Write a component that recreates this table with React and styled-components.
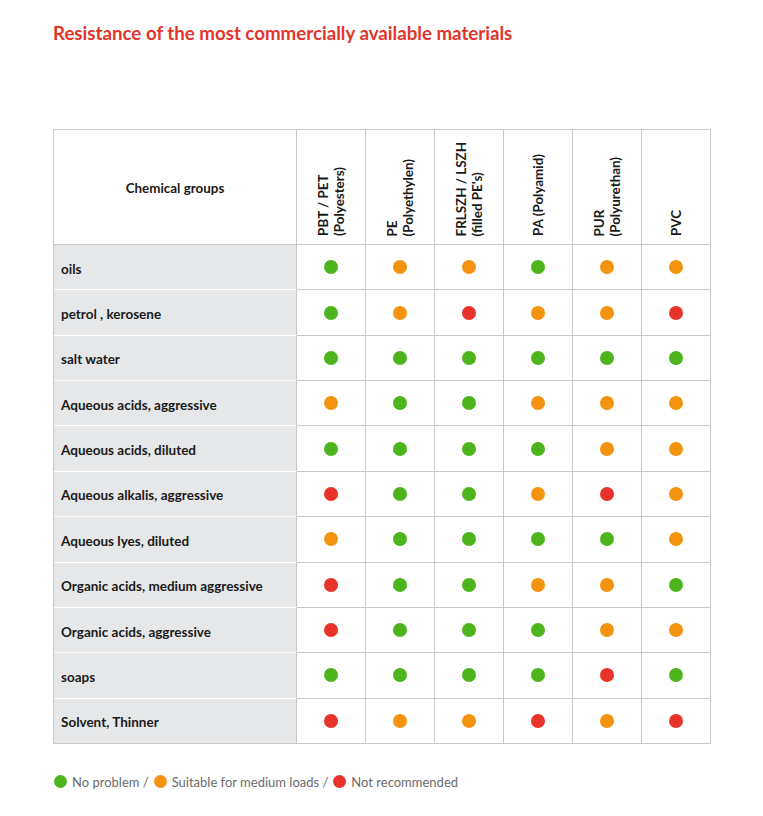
import React from "react";
import styled, { createGlobalStyle } from "styled-components";

const Global = createGlobalStyle`
  html, body { margin: 0; padding: 0; background: #fff; }
  body { font-family: Lato, "Open Sans", "Liberation Sans", sans-serif; color: #1e1e1e; }
`;

const COLORS = { G: "#4cb51b", O: "#f39310", R: "#e8322a" };
const BORDER = "#c9c9c9";

const Page = styled.div`
  width: 763px;
  min-height: 816px;
  box-sizing: border-box;
  padding: 22px 0 0 53px;
`;

const Title = styled.h1`
  margin: 0;
  font-size: 18.7px;
  line-height: 22px;
  font-weight: 700;
  color: #e2342b;
  letter-spacing: 0;
`;

const Table = styled.div`
  margin-top: 85px;
  display: grid;
  grid-template-columns: 243px repeat(6, 69px);
  grid-template-rows: 115px repeat(11, 45.36px);
  width: 658px;
  box-sizing: border-box;
  border-top: 1px solid ${BORDER};
  border-left: 1px solid ${BORDER};
`;

const Cell = styled.div`
  box-sizing: border-box;
  border-right: 1px solid ${BORDER};
  border-bottom: 1px solid ${BORDER};
  display: flex;
  align-items: center;
  justify-content: center;
`;

const CornerCell = styled(Cell)`
  font-size: 13.4px;
  font-weight: 700;
  color: #1a1a1a;
  padding-top: 2px;
`;

const HeadCell = styled(Cell)`
  align-items: flex-end;
  padding-bottom: 8px;
`;

const VerticalLabel = styled.span`
  writing-mode: vertical-rl;
  transform: rotate(180deg);
  font-size: 13.4px;
  line-height: 16px;
  font-weight: 700;
  color: #1a1a1a;
  white-space: nowrap;
`;

const LabelCell = styled(Cell)`
  justify-content: flex-start;
  background: #e6e7e8;
  border-bottom-color: ${(p) => (p.$last ? BORDER : "#ffffff")};
  padding: 3px 0 0 7px;
  font-size: 13.5px;
  font-weight: 700;
  color: #1a1a1a;
`;

const Dot = styled.span`
  display: block;
  width: 14px;
  height: 14px;
  border-radius: 50%;
  background: ${(p) => COLORS[p.$c]};
`;

const Legend = styled.div`
  margin-top: 30px;
  display: flex;
  align-items: center;
  gap: 5px;
  font-size: 13px;
  color: #6b6b6b;
  padding-left: 1px;
`;

const LegendDot = styled.span`
  display: inline-block;
  width: 13px;
  height: 13px;
  border-radius: 50%;
  background: ${(p) => COLORS[p.$c]};
`;

const headers = [
  ["PBT / PET", "(Polyesters)"],
  ["PE", "(Polyethylen)"],
  ["FRLSZH / LSZH", "(filled PE's)"],
  ["PA (Polyamid)"],
  ["PUR", "(Polyurethan)"],
  ["PVC"],
];

const rows = [
  ["oils", "GOOGOO"],
  ["petrol , kerosene", "GOROOR"],
  ["salt water", "GGGGGG"],
  ["Aqueous acids, aggressive", "OGGOOO"],
  ["Aqueous acids, diluted", "GGGGOO"],
  ["Aqueous alkalis, aggressive", "RGGORO"],
  ["Aqueous lyes, diluted", "OGGGGO"],
  ["Organic acids, medium aggressive", "RGGOOG"],
  ["Organic acids, aggressive", "RGGGOO"],
  ["soaps", "GGGGRG"],
  ["Solvent, Thinner", "ROOROR"],
];

export default function App() {
  return (
    <>
      <Global />
      <Page>
        <Title>Resistance of the most commercially available materials</Title>
        <Table>
          <CornerCell>Chemical groups</CornerCell>
          {headers.map((h, i) => (
            <HeadCell key={i}>
              <VerticalLabel>
                {h.map((line, j) => (
                  <React.Fragment key={j}>
                    {j > 0 && <br />}
                    {line}
                  </React.Fragment>
                ))}
              </VerticalLabel>
            </HeadCell>
          ))}
          {rows.map(([label, vals], r) => (
            <React.Fragment key={label}>
              <LabelCell $last={r === rows.length - 1}>{label}</LabelCell>
              {vals.split("").map((v, c) => (
                <Cell key={c}>
                  <Dot $c={v} />
                </Cell>
              ))}
            </React.Fragment>
          ))}
        </Table>
        <Legend>
          <LegendDot $c="G" />
          <span>No problem /</span>
          <LegendDot $c="O" />
          <span>Suitable for medium loads /</span>
          <LegendDot $c="R" />
          <span>Not recommended</span>
        </Legend>
      </Page>
    </>
  );
}
